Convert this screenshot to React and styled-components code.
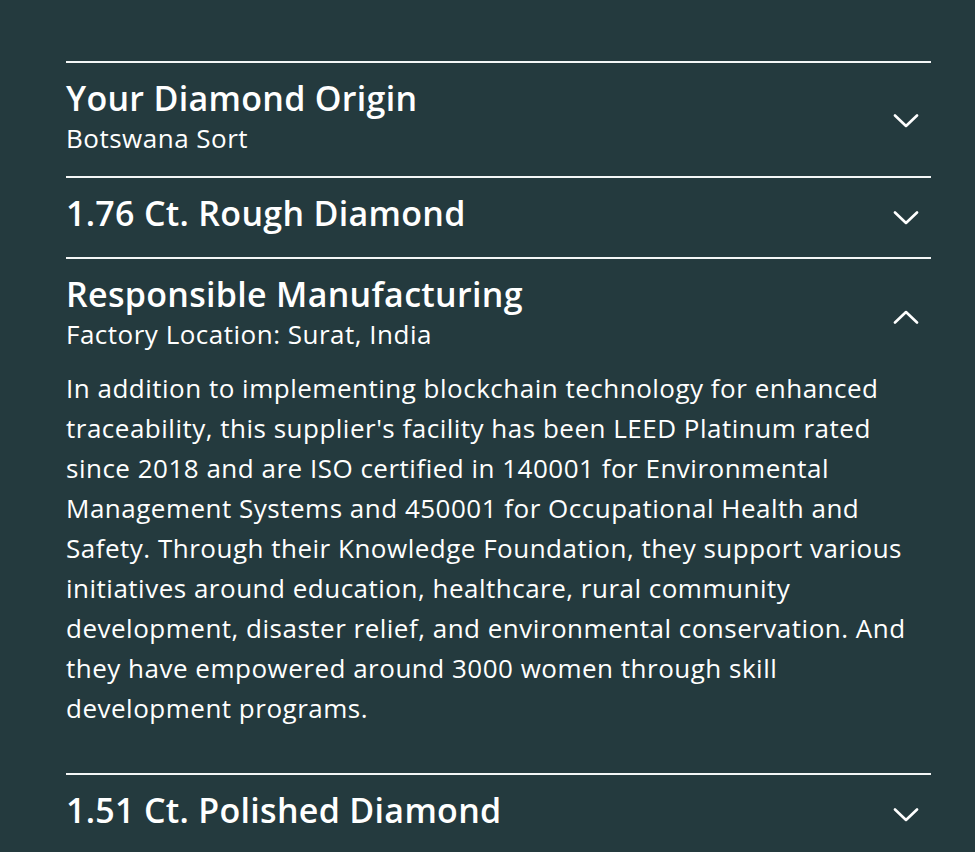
import React, { useState } from 'react';
import styled, { createGlobalStyle } from 'styled-components';

const GlobalStyle = createGlobalStyle`
  html, body {
    margin: 0;
    padding: 0;
    background: #243a3e;
  }
  body {
    font-family: "Open Sans", Lato, sans-serif;
    color: #fff;
  }
`;

const Page = styled.div`
  min-height: 852px;
  box-sizing: border-box;
  padding: 61px 44px 0 66px;
  background: #243a3e;
`;

const Item = styled.section`
  border-top: 2px solid #f4f6f6;
`;

const Header = styled.button`
  display: flex;
  align-items: center;
  justify-content: space-between;
  width: 100%;
  padding: 15px 12px ${(p) => (p.$hasSub ? '22px' : '24px')} 0;
  background: none;
  border: none;
  color: inherit;
  font: inherit;
  text-align: left;
  cursor: pointer;
`;

const Titles = styled.div`
  display: flex;
  flex-direction: column;
`;

const Title = styled.h2`
  margin: 0;
  font-size: 34px;
  font-weight: 600;
  line-height: 40px;
  letter-spacing: 0.3px;
`;

const Subtitle = styled.div`
  margin-top: 4px;
  font-size: 26px;
  line-height: 32px;
  letter-spacing: 0.5px;
`;

const Chevron = styled.svg`
  width: 26px;
  height: 14px;
  margin-top: 10px;
  flex-shrink: 0;
`;

const Body = styled.p`
  margin: -4px 0 0;
  padding: 0 20px 45px 0;
  font-size: 26px;
  line-height: 40px;
  letter-spacing: 0.5px;
`;

const sections = [
  { title: 'Your Diamond Origin', subtitle: 'Botswana Sort' },
  { title: '1.76 Ct. Rough Diamond' },
  {
    title: 'Responsible Manufacturing',
    subtitle: 'Factory Location: Surat, India',
    body:
      "In addition to implementing blockchain technology for enhanced traceability, this supplier's facility has been LEED Platinum rated since 2018 and are ISO certified in 140001 for Environmental Management Systems and 450001 for Occupational Health and Safety. Through their Knowledge Foundation, they support various initiatives around education, healthcare, rural community development, disaster relief, and environmental conservation. And they have empowered around 3000 women through skill development programs.",
  },
  { title: '1.51 Ct. Polished Diamond' },
];

const ChevronIcon = ({ up }) => (
  <Chevron viewBox="0 0 26 14" fill="none" stroke="#fff" strokeWidth="2.6" strokeLinecap="round" strokeLinejoin="round">
    <path d={up ? 'M2 12.5 L13 2 L24 12.5' : 'M2 1.5 L13 12 L24 1.5'} />
  </Chevron>
);

export default function App() {
  const [open, setOpen] = useState(2);

  return (
    <Page>
      <GlobalStyle />
      {sections.map((s, i) => (
        <Item key={s.title}>
          <Header $hasSub={!!s.subtitle} onClick={() => setOpen(open === i ? -1 : i)}>
            <Titles>
              <Title>{s.title}</Title>
              {s.subtitle && <Subtitle>{s.subtitle}</Subtitle>}
            </Titles>
            <ChevronIcon up={open === i} />
          </Header>
          {open === i && s.body && <Body>{s.body}</Body>}
        </Item>
      ))}
    </Page>
  );
}
